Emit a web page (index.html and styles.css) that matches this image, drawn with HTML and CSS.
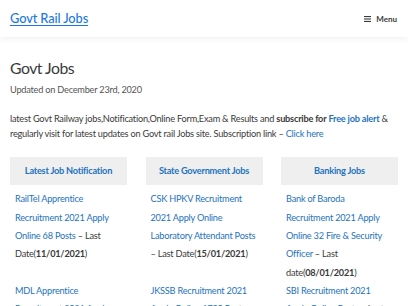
FILE: index.html
```html
<!DOCTYPE html>
<html lang="en">
<head>
  <meta charset="UTF-8">
  <meta name="viewport" content="width=device-width, initial-scale=1.0">
  <title>Govt Jobs - Govt Rail Jobs</title>
  <link rel="stylesheet" href="styles.css">
</head>
<body>
  <!-- Site Header -->
  <header class="site-header">
    <a class="site-title" href="#">Govt Rail Jobs</a>
    <button class="menu-toggle">
      <svg width="7" height="6" viewBox="0 0 7 6"><rect y="0" width="7" height="1.1"/><rect y="2.45" width="7" height="1.1"/><rect y="4.9" width="7" height="1.1"/></svg>
      <span>Menu</span>
    </button>
  </header>

  <!-- Page Content -->
  <main class="content">
    <h1 class="entry-title">Govt Jobs</h1>
    <p class="entry-meta">Updated on December 23rd, 2020</p>

    <p class="intro">latest Govt Railway jobs,Notification,Online Form,Exam &amp; Results and <strong>subscribe for</strong> <a class="strong-link" href="#">Free job alert</a> &amp; regularly visit for latest updates on Govt rail Jobs site. Subscription link &ndash; <a href="#">Click here</a></p>

    <div class="jobs-table">
      <div class="jobs-head"><a href="#">Latest Job Notification</a></div>
      <div class="jobs-head"><a href="#">State Government Jobs</a></div>
      <div class="jobs-head"><a href="#">Banking Jobs</a></div>

      <div class="jobs-cell"><a href="#">RailTel Apprentice Recruitment 2021 Apply Online 68 Posts</a> &ndash; Last Date(<strong>11/01/2021</strong>)</div>
      <div class="jobs-cell"><a href="#">CSK HPKV Recruitment 2021 Apply Online Laboratory Attendant Posts</a> &ndash; Last Date(<strong>15/01/2021</strong>)</div>
      <div class="jobs-cell"><a href="#">Bank of Baroda Recruitment 2021 Apply Online 32 Fire &amp; Security Officer</a> &ndash; Last date(<strong>08/01/2021</strong>)</div>

      <div class="jobs-cell"><a href="#">MDL Apprentice Recruitment 2021 Apply Online 510 Posts</a> &ndash; Last Date(<strong>25/01/2021</strong>)</div>
      <div class="jobs-cell"><a href="#">JKSSB Recruitment 2021 Apply Online 1700 Posts</a> &ndash; Last Date(<strong>20/01/2021</strong>)</div>
      <div class="jobs-cell"><a href="#">SBI Recruitment 2021 Apply Online Posts</a> &ndash; Last Date(<strong>11/01/2021</strong>)</div>
    </div>
  </main>
</body>
</html>
```

FILE: styles.css
```css
/* Reset */
* {
  margin: 0;
  padding: 0;
  box-sizing: border-box;
}

body {
  font-family: Lato, 'Noto Sans', sans-serif;
  font-size: 9.2px;
  line-height: 1.5;
  letter-spacing: -0.22px;
  color: #3a3a3a;
  background: #fff;
}

a {
  color: #1e73be;
  text-decoration: none;
}

/* Header */
.site-header {
  height: 37px;
  display: flex;
  align-items: center;
  justify-content: space-between;
  padding: 0 10px;
  background: #fff;
  box-shadow: 0 2px 6px rgba(0, 0, 0, 0.06);
}

.site-title {
  font-size: 12.8px;
  font-weight: 500;
  letter-spacing: -0.1px;
  text-decoration: underline;
  text-underline-offset: 2px;
  color: #1b78e2;
}

.menu-toggle {
  display: flex;
  align-items: center;
  gap: 5px;
  border: none;
  background: none;
  font-family: inherit;
  font-size: 8px;
  font-weight: 700;
  letter-spacing: 0;
  color: #3a3a3a;
  padding-right: 1px;
}

.menu-toggle svg {
  fill: #3a3a3a;
}

/* Content */
.content {
  padding: 20.5px 10px 0;
}

.entry-title {
  font-size: 15.8px;
  font-weight: 400;
  letter-spacing: -0.5px;
  line-height: 19px;
  color: #3a3a3a;
}

.entry-meta {
  margin-top: 6px;
  line-height: 13.5px;
  color: #555;
}

.intro {
  margin-top: 16px;
  line-height: 14.7px;
}

.intro strong,
.strong-link {
  font-weight: 700;
}

/* Jobs Table */
.jobs-table {
  display: grid;
  grid-template-columns: repeat(3, 117px);
  column-gap: 18.5px;
  margin-top: 16px;
  line-height: 18.33px;
}

.jobs-head {
  height: 28px;
  display: flex;
  align-items: center;
  justify-content: center;
  background: #efefef;
  font-weight: 700;
  margin-bottom: 4.8px;
}

.jobs-cell {
  padding: 0 5px;
}

.jobs-cell strong {
  font-weight: 700;
}
```
